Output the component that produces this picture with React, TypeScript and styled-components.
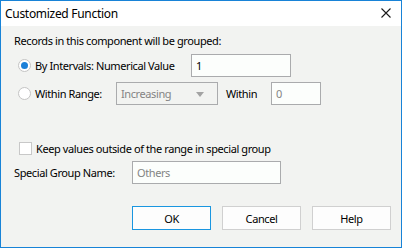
import React from 'react';
import styled, { createGlobalStyle } from 'styled-components';

const GlobalStyle = createGlobalStyle`
  html, body {
    margin: 0;
    padding: 0;
    background: #ffffff;
  }
  body {
    font-family: 'Noto Sans', 'Open Sans', sans-serif;
    font-size: 11px;
    letter-spacing: -0.4px;
    color: #000000;
  }
`;

type FieldProps = { $width: number; $muted?: boolean; $flat?: boolean };

const App = () => {
  return (
    <Window>
      <GlobalStyle />
      <TitleBar>
        <Title>Customized Function</Title>
        <CloseButton>
          <svg width="10" height="10" viewBox="0 0 10 10">
            <path d="M0.5 0.5 L9.5 9.5 M9.5 0.5 L0.5 9.5" stroke="#1a1a1a" strokeWidth="1.1" />
          </svg>
        </CloseButton>
      </TitleBar>
      <Body>
        <Heading>Records in this component will be grouped:</Heading>
        <OptionRow>
          <Radio $checked />
          <OptionLabel $width={156}>By Intervals: Numerical Value</OptionLabel>
          <Field $width={100}>1</Field>
        </OptionRow>
        <OptionRow $gap={5}>
          <Radio />
          <OptionLabel $width={81}>Within Range:</OptionLabel>
          <Field $width={102} $muted $flat>
            Increasing
            <Caret />
          </Field>
          <InlineLabel>Within</InlineLabel>
          <Field $width={50} $muted>0</Field>
        </OptionRow>
        <CheckRow>
          <Checkbox />
          <CheckLabel>Keep values outside of the range in special group</CheckLabel>
        </CheckRow>
        <NameRow>
          <NameLabel>Special Group Name:</NameLabel>
          <Field $width={149} $muted>Others</Field>
        </NameRow>
        <ButtonBar>
          <Button $primary>OK</Button>
          <Button>Cancel</Button>
          <Button>Help</Button>
        </ButtonBar>
      </Body>
    </Window>
  );
};

const Window = styled.div`
  width: 402px;
  height: 248px;
  box-sizing: border-box;
  border: 1px solid #1883d7;
  display: flex;
  flex-direction: column;
  background: #f2f3f1;
`;

const TitleBar = styled.div`
  height: 25px;
  background: #ffffff;
  display: flex;
  align-items: center;
  justify-content: space-between;
  padding: 0 10px 0 4px;
`;

const Title = styled.div`
  font-size: 12px;
  letter-spacing: -0.3px;
  line-height: 16px;
`;

const CloseButton = styled.div`
  width: 10px;
  height: 10px;
  display: flex;
  margin-top: -1px;
`;

const Body = styled.div`
  flex: 1;
  display: flex;
  flex-direction: column;
  padding: 7px 10px 0 13px;
`;

const Heading = styled.div`
  line-height: 16px;
  white-space: nowrap;
`;

const OptionRow = styled.div<{ $gap?: number }>`
  display: flex;
  align-items: center;
  height: 23px;
  margin-top: ${(p) => p.$gap ?? 5}px;
`;

const Radio = styled.span<{ $checked?: boolean }>`
  width: 13px;
  height: 13px;
  box-sizing: border-box;
  border-radius: 50%;
  border: 1px solid #c4c4c4;
  background: #ffffff;
  margin: 0 4px 0 4px;
  flex-shrink: 0;
  display: flex;
  align-items: center;
  justify-content: center;
  &::after {
    content: '';
    display: ${(p) => (p.$checked ? 'block' : 'none')};
    width: 7px;
    height: 7px;
    border-radius: 50%;
    background: #1b80d8;
  }
`;

const OptionLabel = styled.span<{ $width: number }>`
  width: ${(p) => p.$width}px;
  flex-shrink: 0;
  white-space: nowrap;
`;

const Field = styled.div<FieldProps>`
  position: relative;
  width: ${(p) => p.$width}px;
  height: 23px;
  box-sizing: border-box;
  border: 1px solid #aaabad;
  background: ${(p) => (p.$flat ? '#f2f3f1' : '#fcfefc')};
  color: ${(p) => (p.$muted ? '#848484' : '#000000')};
  display: flex;
  align-items: center;
  padding-left: 4px;
  flex-shrink: 0;
  white-space: nowrap;
`;

const Caret = styled.span`
  position: absolute;
  right: 13px;
  top: 9px;
  width: 0;
  height: 0;
  border-left: 4px solid transparent;
  border-right: 4px solid transparent;
  border-top: 5px solid #a3a3a3;
`;

const InlineLabel = styled.span`
  width: 53px;
  padding-left: 8px;
  box-sizing: border-box;
  flex-shrink: 0;
  white-space: nowrap;
`;

const CheckRow = styled.div`
  display: flex;
  align-items: center;
  height: 16px;
  margin-top: 35px;
`;

const Checkbox = styled.span`
  width: 13px;
  height: 13px;
  box-sizing: border-box;
  border: 1px solid #c8c8c8;
  background: #ffffff;
  margin: 0 4px 0 5px;
  flex-shrink: 0;
`;

const CheckLabel = styled.span`
  white-space: nowrap;
`;

const NameRow = styled.div`
  display: flex;
  align-items: center;
  height: 23px;
  margin-top: 5px;
`;

const NameLabel = styled.span`
  width: 118px;
  flex-shrink: 0;
  white-space: nowrap;
`;

const ButtonBar = styled.div`
  display: flex;
  justify-content: flex-end;
  gap: 11px;
  margin-top: 22px;
`;

const Button = styled.div<{ $primary?: boolean }>`
  width: 79px;
  height: 24px;
  box-sizing: border-box;
  border: 1px solid ${(p) => (p.$primary ? '#1a96e0' : '#d0d0d0')};
  background: #fdfdfd;
  display: flex;
  align-items: center;
  justify-content: center;
`;

export default App;
